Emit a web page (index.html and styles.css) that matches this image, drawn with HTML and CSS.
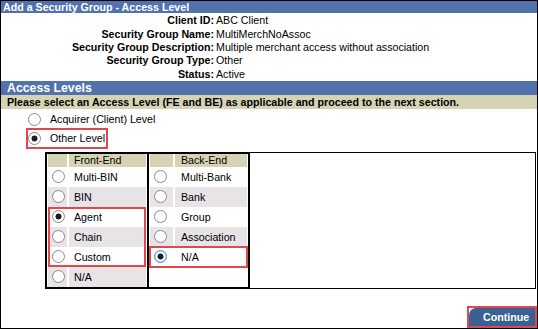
FILE: index.html
```html
<!DOCTYPE html>
<html lang="en">
<head>
<meta charset="utf-8">
<title>Add a Security Group - Access Level</title>
<link rel="stylesheet" href="styles.css">
</head>
<body>
<div class="page">
  <div class="titlebar">Add a Security Group - Access Level</div>
  <div class="info">
    <div class="lbl">Client ID:</div><div class="val">ABC Client</div>
    <div class="lbl">Security Group Name:</div><div class="val">MultiMerchNoAssoc</div>
    <div class="lbl">Security Group Description:</div><div class="val">Multiple merchant access without association</div>
    <div class="lbl">Security Group Type:</div><div class="val">Other</div>
    <div class="lbl">Status:</div><div class="val">Active</div>
  </div>
  <div class="secbar">Access Levels</div>
  <div class="instr">Please select an Access Level (FE and BE) as applicable and proceed to the next section.</div>
  <div class="options">
    <label class="option"><input type="radio" name="lvl" class="radio"><span>Acquirer (Client) Level</span></label>
    <label class="option hl"><input type="radio" name="lvl" class="radio" checked><span>Other Level</span></label>
  </div>
  <div class="levels">
    <div class="lvtable fe">
      <div class="lvrow head"><div class="c1"></div><div class="c2">Front-End</div></div>
      <div class="lvrow"><div class="c1"><input type="radio" name="fe" class="radio"></div><div class="c2">Multi-BIN</div></div>
      <div class="lvrow alt"><div class="c1"><input type="radio" name="fe" class="radio"></div><div class="c2">BIN</div></div>
      <div class="hlgroup">
        <div class="lvrow"><div class="c1"><input type="radio" name="fe" class="radio" checked></div><div class="c2">Agent</div></div>
        <div class="lvrow alt"><div class="c1"><input type="radio" name="fe" class="radio"></div><div class="c2">Chain</div></div>
        <div class="lvrow"><div class="c1"><input type="radio" name="fe" class="radio"></div><div class="c2">Custom</div></div>
      </div>
      <div class="lvrow alt"><div class="c1"><input type="radio" name="fe" class="radio"></div><div class="c2">N/A</div></div>
    </div>
    <div class="lvtable be">
      <div class="lvrow head"><div class="c1"></div><div class="c2">Back-End</div></div>
      <div class="lvrow"><div class="c1"><input type="radio" name="be" class="radio"></div><div class="c2">Multi-Bank</div></div>
      <div class="lvrow alt"><div class="c1"><input type="radio" name="be" class="radio"></div><div class="c2">Bank</div></div>
      <div class="lvrow"><div class="c1"><input type="radio" name="be" class="radio"></div><div class="c2">Group</div></div>
      <div class="lvrow alt"><div class="c1"><input type="radio" name="be" class="radio"></div><div class="c2">Association</div></div>
      <div class="lvrow hlrow"><div class="c1"><input type="radio" name="be" class="radio focus" checked></div><div class="c2">N/A</div></div>
    </div>
  </div>
  <div class="actions">
    <div class="btnbox"><button type="button" class="btn">Continue</button></div>
  </div>
</div>
</body>
</html>
```
FILE: styles.css
```css
html, body {
  margin: 0;
  padding: 0;
  background: #fff;
}
body {
  font-family: "Liberation Sans", Arial, sans-serif;
  font-size: 8pt;
  color: #000;
}
.page {
  width: 538px;
  height: 329px;
  box-sizing: border-box;
  border: 1px solid #000;
  display: flex;
  flex-direction: column;
  overflow: hidden;
}
.titlebar {
  height: 12px;
  line-height: 12px;
  background: #5272ae;
  color: #fff;
  font-weight: bold;
  padding-left: 2px;
  white-space: nowrap;
}
.info {
  display: grid;
  grid-template-columns: 213px 1fr;
  column-gap: 2px;
  padding-top: 1.4px;
  line-height: 13.3px;
}
.lbl {
  font-weight: bold;
  text-align: right;
  white-space: nowrap;
}
.val {
  white-space: nowrap;
}
.secbar {
  height: 14px;
  line-height: 14px;
  background: #5272ae;
  color: #fff;
  font-weight: bold;
  font-size: 12.3px;
  padding-left: 6px;
}
.instr {
  height: 14px;
  line-height: 14px;
  background: #d6d3b4;
  font-weight: bold;
  padding-left: 6px;
  white-space: nowrap;
}
.options {
  display: flex;
  flex-direction: column;
  align-items: flex-start;
  padding-top: 1px;
}
.option {
  display: flex;
  align-items: center;
  gap: 8.5px;
  height: 19px;
  margin-left: 25.7px;
  padding-left: 1.8px;
  padding-right: 2px;
}
.option.hl {
  outline: 2px solid #e2474b;
  outline-offset: -1px;
}
.radio {
  -webkit-appearance: none;
  appearance: none;
  margin: 0;
  width: 13px;
  height: 13px;
  box-sizing: border-box;
  border: 1px solid #8a8a8a;
  border-radius: 50%;
  background: #fff;
  flex: none;
}
.radio:checked {
  background: radial-gradient(circle, #1c1c1c 0 2.7px, #fff 3.3px);
}
.radio.focus {
  border-color: #3a95d3;
  box-shadow: inset 0 0 0 0.6px #9fcdee;
}
.levels {
  margin-top: 4px;
  margin-left: 44px;
  width: 491px;
  box-sizing: border-box;
  border: 1px solid #000;
  display: flex;
  align-items: stretch;
}
.lvtable {
  box-sizing: border-box;
  border: 1px solid #000;
  padding: 0 1px;
  background: #fff;
}
.fe {
  flex: 0 0 102px;
  --c1: 19px;
  --pad: 5px;
}
.be {
  flex: 0 0 102px;
  border-right-width: 2px;
  --c1: 23px;
  --pad: 6px;
}
.lvrow {
  display: grid;
  grid-template-columns: var(--c1) 1fr;
  column-gap: 2px;
  height: 20px;
}
.lvrow.head {
  height: 13px;
}
.lvrow .c1,
.lvrow .c2 {
  display: flex;
  align-items: center;
  background: #fff;
  white-space: nowrap;
}
.lvrow .c1 {
  padding-left: 4px;
}
.lvrow .c2 {
  padding-left: var(--pad);
}
.lvrow.alt .c1,
.lvrow.alt .c2 {
  background: #e7e3e7;
}
.lvrow.head .c1,
.lvrow.head .c2 {
  background: #d6d3b4;
}
.hlgroup {
  outline: 2px solid #e2474b;
  outline-offset: -2px;
}
.hlrow {
  outline: 2px solid #e2474b;
  outline-offset: -1px;
}
.actions {
  margin-top: auto;
  display: flex;
  justify-content: flex-end;
}
.btnbox {
  width: 70px;
  height: 22px;
  box-sizing: border-box;
  border: 2px solid #e2474b;
  background: #fff;
}
.btn {
  display: block;
  width: 100%;
  height: 100%;
  margin: 0;
  border: 0;
  padding: 0 0 0 14px;
  background: #3b6194;
  color: #fff;
  font-family: "Liberation Sans", Arial, sans-serif;
  font-size: 8pt;
  font-weight: bold;
  text-align: left;
  border-top-left-radius: 7px;
  cursor: pointer;
}
```
